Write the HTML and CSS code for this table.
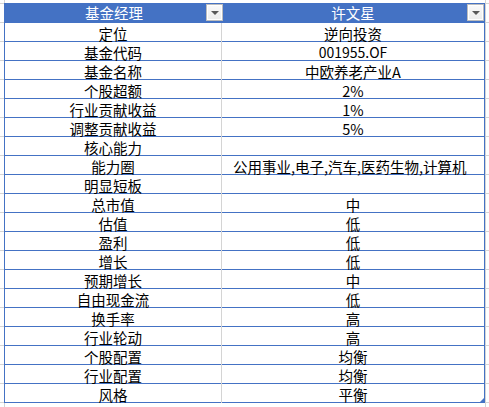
FILE: index.html
```html
<!DOCTYPE html>
<html lang="zh-CN">
<head>
<meta charset="utf-8">
<link rel="stylesheet" href="styles.css">
</head>
<body>
<div class="sheet">
  <div class="table">
    <div class="row head">
      <div class="cell c1">基金经理<span class="dd"><span class="tri"></span></span></div>
      <div class="cell c2">许文星<span class="dd"><span class="tri"></span></span></div>
    </div>
    <div class="row"><div class="cell c1">定位</div><div class="cell c2">逆向投资</div></div>
    <div class="row"><div class="cell c1">基金代码</div><div class="cell c2 lat">001955.OF</div></div>
    <div class="row"><div class="cell c1">基金名称</div><div class="cell c2">中欧养老产业A</div></div>
    <div class="row"><div class="cell c1">个股超额</div><div class="cell c2">2%</div></div>
    <div class="row"><div class="cell c1">行业贡献收益</div><div class="cell c2">1%</div></div>
    <div class="row"><div class="cell c1">调整贡献收益</div><div class="cell c2">5%</div></div>
    <div class="row"><div class="cell c1">核心能力</div><div class="cell c2"></div></div>
    <div class="row"><div class="cell c1">能力圈</div><div class="cell c2 left">公用事业,电子,汽车,医药生物,计算机</div></div>
    <div class="row"><div class="cell c1">明显短板</div><div class="cell c2"></div></div>
    <div class="row"><div class="cell c1">总市值</div><div class="cell c2">中</div></div>
    <div class="row"><div class="cell c1">估值</div><div class="cell c2">低</div></div>
    <div class="row"><div class="cell c1">盈利</div><div class="cell c2">低</div></div>
    <div class="row"><div class="cell c1">增长</div><div class="cell c2">低</div></div>
    <div class="row"><div class="cell c1">预期增长</div><div class="cell c2">中</div></div>
    <div class="row"><div class="cell c1">自由现金流</div><div class="cell c2">低</div></div>
    <div class="row"><div class="cell c1">换手率</div><div class="cell c2">高</div></div>
    <div class="row"><div class="cell c1">行业轮动</div><div class="cell c2">高</div></div>
    <div class="row"><div class="cell c1">个股配置</div><div class="cell c2">均衡</div></div>
    <div class="row"><div class="cell c1">行业配置</div><div class="cell c2">均衡</div></div>
    <div class="row"><div class="cell c1">风格</div><div class="cell c2">平衡</div></div>
    <span class="handle"></span>
  </div>
</div>
</body>
</html>
```
FILE: styles.css
```css
html, body {
  margin: 0;
  padding: 0;
  background: #fff;
}
body {
  width: 489px;
  height: 407px;
  overflow: hidden;
  font-family: "Noto Sans CJK SC", "Liberation Sans", sans-serif;
  font-size: 14.5px;
  color: #000;
  background-image:
    repeating-linear-gradient(to bottom, transparent 0, transparent 3px, #d4d4d4 3px, #d4d4d4 4px, transparent 4px, transparent 19px);
  background-size: 100% 19px;
}
.sheet {
  position: relative;
  padding: 3px 0 0 4px;
  height: 404px;
  background-image:
    linear-gradient(#d4d4d4, #d4d4d4),
    linear-gradient(#d4d4d4, #d4d4d4);
  background-repeat: no-repeat;
  background-size: 1px 100%, 1px 100%;
  background-position: 4px 0, 485px 0;
}
.table {
  position: relative;
  width: 479px;
  border-left: 1px solid #4472c4;
  border-right: 1px solid #4472c4;
  background: #fff;
}
.row {
  display: grid;
  grid-template-columns: 217px 262px;
  height: 18px;
  border-bottom: 1px solid #4472c4;
}
.row.head {
  height: 20px;
  border-bottom: 0;
  background: #4472c4;
  color: #fff;
}
.cell {
  position: relative;
  text-align: center;
  line-height: 17px;
  padding-top: 2px;
  white-space: nowrap;
  overflow: visible;
}
.row.head .cell {
  line-height: 18px;
  padding-top: 1px;
}
.c1 {
  border-right: 1px solid #d4d4d4;
}
.row.head .c1 {
  border-right: 0;
  width: 218px;
}
.c2.left {
  text-align: left;
  padding-left: 11px;
  letter-spacing: 0;
}
.lat {
  font-size: 14px;
}
.dd {
  position: absolute;
  top: 1px;
  right: 0;
  width: 15px;
  height: 15px;
  border: 1px solid #bdbdbd;
  background: linear-gradient(#fafafa, #ececec);
  box-shadow: inset 0 0 0 1px #fff;
}
.row.head .c1 .dd {
  right: 0;
}
.tri {
  position: absolute;
  left: 4px;
  top: 6px;
  width: 0;
  height: 0;
  border-left: 4px solid transparent;
  border-right: 4px solid transparent;
  border-top: 4px solid #595959;
}
.handle {
  position: absolute;
  right: 0;
  bottom: 0;
  width: 0;
  height: 0;
  border-left: 5px solid transparent;
  border-bottom: 5px solid #4472c4;
}
```
